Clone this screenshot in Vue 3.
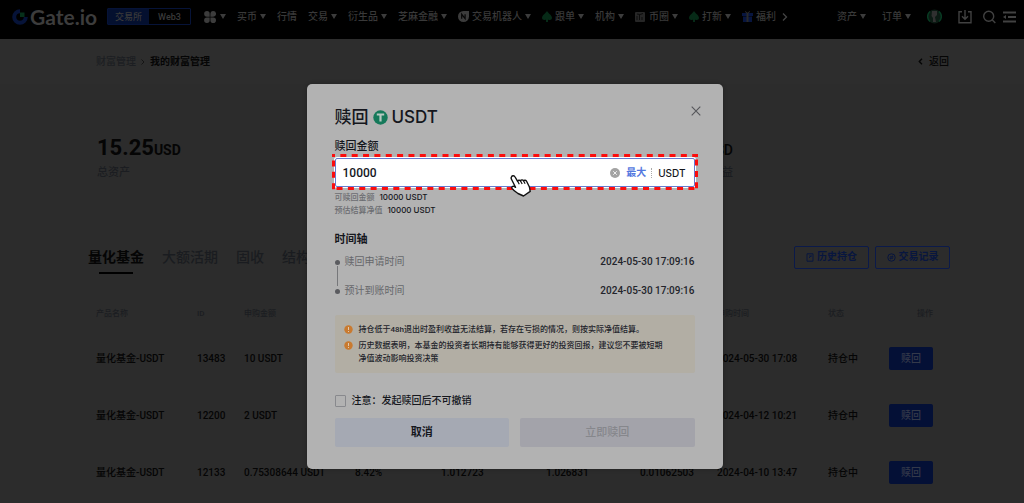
<script setup>
import { ref } from 'vue'

const amount = ref('10000')
const agreed = ref(false)

const navItems = [
  { label: '买币', arrow: true },
  { label: '行情' },
  { label: '交易', arrow: true },
  { label: '衍生品', arrow: true },
  { label: '芝麻金融', arrow: true },
  { label: '交易机器人', arrow: true, icon: 'bot' },
  { label: '跟单', arrow: true, icon: 'leaf' },
  { label: '机构', arrow: true },
  { label: '币圈', arrow: true, icon: 'chart' },
  { label: '打新', arrow: true, icon: 'leaf' },
  { label: '福利', icon: 'gift' }
]

const tabs = ['量化基金', '大额活期', '固收', '结构化']

const columns = ['产品名称', 'ID', '申购金额', '', '', '', '', '申购时间', '状态', '操作']

const rows = [
  ['量化基金-USDT', '13483', '10 USDT', '', '', '', '', '2024-05-30 17:08', '持仓中'],
  ['量化基金-USDT', '12200', '2 USDT', '', '', '', '', '2024-04-12 10:21', '持仓中'],
  ['量化基金-USDT', '12133', '0.75308644 USDT', '8.42%', '1.012723', '1.026831', '0.01062503', '2024-04-10 13:47', '持仓中']
]

const timeline = [
  { label: '赎回申请时间', time: '2024-05-30 17:09:16' },
  { label: '预计到账时间', time: '2024-05-30 17:09:16' }
]
</script>

<template>
  <div class="page">
    <header class="topbar">
      <a class="logo" href="#">
        <svg width="18" height="18" viewBox="0 0 18 18">
          <path d="M9 3.2A5.8 5.8 0 1 0 14.8 9" fill="none" stroke="#061338" stroke-width="4" />
          <rect x="9" y="4.5" width="4.5" height="4.5" fill="#06301a" />
        </svg>
        <span>Gate.io</span>
      </a>
      <div class="switch">
        <button class="on">交易所</button>
        <button>Web3</button>
      </div>
      <button class="apps" aria-label="应用">
        <svg width="12" height="12" viewBox="0 0 12 12" fill="#3c3c3c">
          <path d="M3 0a2.7 2.7 0 0 1 2.7 2.7v3H3A2.8 2.8 0 0 1 3 0zM9.2 0a2.8 2.8 0 0 1 0 5.7H6.4v-3A2.7 2.7 0 0 1 9.2 0zM3 6.4h2.7v2.8A2.8 2.8 0 1 1 3 6.4zM6.4 6.4h2.8a2.8 2.8 0 1 1-2.8 2.8z" />
        </svg>
        <i class="caret"></i>
      </button>
      <nav class="nav">
        <a v-for="(item, i) in navItems" :key="i" href="#">
          <svg v-if="item.icon === 'bot'" width="11" height="11" viewBox="0 0 11 11">
            <path d="M5.5 0H11v5.5A5.5 5.5 0 1 1 5.5 0z" fill="#3c3c3c" />
            <path d="M3.7 7.8V3.3l3.4 4.3V3.2" fill="none" stroke="#050505" stroke-width="1.2" />
          </svg>
          <svg v-else-if="item.icon === 'leaf'" width="10" height="11" viewBox="0 0 10 11">
            <path d="M5 0c1 2 5 4.400 5 6.800C10 9 7.400 9.600 6 8.500V11H4V8.500C2.600 9.600 0 9 0 6.800 0 4.400 4 2 5 0z" fill="#062a17" />
          </svg>
          <svg v-else-if="item.icon === 'chart'" width="11" height="11" viewBox="0 0 11 11">
            <rect y="1" width="10" height="10" rx="1" fill="#262626" />
            <path d="M2 9V5M4.500 9V4M7 9V6M2 3l3 .5L8 2.500" fill="none" stroke="#0c0c0c" />
          </svg>
          <svg v-else-if="item.icon === 'gift'" width="11" height="11" viewBox="0 0 11 11">
            <path d="M0 2h11v3H0zM1 5.500h9V11H1z" fill="#07153f" />
            <path d="M4.500 2h2v9h-2z" fill="#292929" />
            <path d="M5.500 2L3 .5M5.500 2L8 .5" stroke="#292929" />
          </svg>
          <span>{{ item.label }}</span>
          <i v-if="item.arrow" class="caret"></i>
        </a>
        <svg class="more" width="6" height="8" viewBox="0 0 6 8"><path d="M1 .5L4.500 4 1 7.500" fill="none" stroke="#444" stroke-width="1.3" /></svg>
      </nav>
      <div class="account">
        <a href="#"><span>资产</span><i class="caret"></i></a>
        <a href="#"><span>订单</span><i class="caret"></i></a>
        <svg width="15" height="15" viewBox="0 0 15 15">
          <circle cx="7.500" cy="7.500" r="7" fill="#0b1a13" />
          <path d="M3 2.500a6.500 6.500 0 0 0 0 10M12 2.500a6.500 6.500 0 0 1 0 10" fill="none" stroke="#083a22" stroke-width="1.500" />
          <path d="M5 2h5v4l-2 2 1 5H6V9L4.500 7z" fill="#303030" />
        </svg>
        <svg width="14" height="14" viewBox="0 0 14 14" fill="none" stroke="#414141" stroke-width="1.4">
          <path d="M4 1.700H1v11h12v-11h-3M7 0v9M4 6.300l3 3 3-3" />
        </svg>
        <svg class="search" width="13" height="14" viewBox="0 0 13 14" fill="none" stroke="#414141" stroke-width="1.400">
          <circle cx="5.700" cy="6.200" r="5" /><path d="M9.300 10l3 3" />
        </svg>
        <svg class="menu" width="13" height="12" viewBox="0 0 13 12" fill="#414141">
          <path d="M0 .5h13v2H0zM5 5h8v2H5zM0 9.500h13v2H0zM0 6l3-2v4z" />
        </svg>
      </div>
    </header>

    <div class="crumbs">
      <div class="path">
        <a href="#">财富管理</a>
        <svg width="4" height="6" viewBox="0 0 4 6"><path d="M.5.5L3 3 .5 5.500" fill="none" stroke="#151515" /></svg>
        <b>我的财富管理</b>
      </div>
      <a class="back" href="#">
        <svg width="5" height="7" viewBox="0 0 5 7"><path d="M4 .8L1.300 3.500 4 6.200" fill="none" stroke="#050505" stroke-width="1.400" /></svg>
        返回
      </a>
    </div>

    <main class="content">
      <section class="stats">
        <div class="stat">
          <p class="value">15.25<small>USD</small></p>
          <p class="name">总资产</p>
        </div>
        <div class="stat right">
          <p class="value"><small>USD</small></p>
          <p class="name">收益</p>
        </div>
      </section>

      <div class="bar">
        <div class="tabs">
          <button v-for="(t, i) in tabs" :key="t" :class="{ active: i === 0 }">{{ t }}</button>
        </div>
        <div class="tools">
          <button>
            <svg width="8" height="9" viewBox="0 0 8 9" fill="none" stroke="#08163f"><path d="M1 .8h6v7.400H1zM3 3h3M3 5l2-2" /></svg>
            历史持仓
          </button>
          <button>
            <svg width="9" height="9" viewBox="0 0 9 9" fill="none" stroke="#08163f"><circle cx="4.500" cy="4.500" r="3.700" /><path d="M3 3.800h3.200L5 2.700M6 5.200H2.800L4 6.300" /></svg>
            交易记录
          </button>
        </div>
      </div>

      <table class="list">
        <colgroup>
          <col v-for="n in 10" :key="n" :class="'c' + n" />
        </colgroup>
        <thead>
          <tr><th v-for="(c, i) in columns" :key="i">{{ c }}</th></tr>
        </thead>
        <tbody>
          <tr v-for="r in rows" :key="r[1]">
            <td v-for="(v, i) in r" :key="i">{{ v }}</td>
            <td><button>赎回</button></td>
          </tr>
        </tbody>
      </table>
    </main>

    <div class="overlay">
      <form class="modal" role="dialog" aria-labelledby="dlg-title" @submit.prevent>
        <div class="head">
          <h2 id="dlg-title">
            赎回
            <svg width="15" height="15" viewBox="0 0 15 15">
              <circle cx="7.500" cy="7.500" r="7.200" fill="#15795a" />
              <path d="M3.800 3.600h7.400v2H8.600v6H6.400v-6H3.800z" fill="#b7c9c2" />
            </svg>
            <span>USDT</span>
          </h2>
          <button class="close" type="button" aria-label="关闭">
            <svg width="10" height="10" viewBox="0 0 10 10"><path d="M.7.7l8.600 8.600M9.300.7L.7 9.300" stroke="#55565a" stroke-width="1.100" /></svg>
          </button>
        </div>

        <label class="label" for="amount">赎回金额</label>
        <div class="field">
          <input id="amount" v-model="amount" type="text" />
          <button class="clear" type="button" aria-label="清除">
            <svg width="10" height="10" viewBox="0 0 10 10"><circle cx="5" cy="5" r="5" fill="#a3a3a3" /><path d="M3.200 3.200l3.600 3.600M6.800 3.200L3.200 6.800" stroke="#eee" /></svg>
          </button>
          <button class="max" type="button">最大</button>
          <i class="sep"></i>
          <span class="unit">USDT</span>
          <svg class="marker" aria-hidden="true"><rect x="0" y="0" width="100%" height="100%" fill="none" stroke="#fb0d0d" stroke-width="6" stroke-dasharray="6 5.350" stroke-dashoffset="3" /></svg>
          <svg class="hand" width="23" height="24" viewBox="0 0 23 24">
            <path d="M1.500 2.800C2.300 1.200 4.300 1.500 5.100 3l2.500 4.300c.3-1.300 2-1.500 2.900-.4.600-1.300 2.300-1.300 3.100-.1.900-1 2.400-.7 3.100.7l2.600 5.200c.6 1.400.5 3.200.9 4.700L13.500 22 8 19.500c-2-1.300-4.500-3-6-5.200-.7-1.500.9-2.600 2.200-1.800l1.300.8L1.600 5.500c-.5-.9-.6-1.900-.1-2.700z" fill="#fff" stroke="#111" stroke-width="1.400" stroke-linejoin="round" />
            <path d="M7.600 7.300l1.700 3M10.500 7l1.700 3M13.600 7l1.500 2.700" stroke="#111" stroke-width="1.200" fill="none" />
          </svg>
        </div>
        <p class="hint">可赎回金额<b>10000 USDT</b></p>
        <p class="hint">预估结算净值<b>10000 USDT</b></p>

        <h3>时间轴</h3>
        <ol class="timeline">
          <li v-for="t in timeline" :key="t.label">
            <span>{{ t.label }}</span><time>{{ t.time }}</time>
          </li>
        </ol>

        <ul class="notice">
          <li>
            <svg width="9" height="9" viewBox="0 0 9 9"><circle cx="4.500" cy="4.500" r="4.200" fill="#c97a2f" /><path d="M4.500 2v3M4.500 6v1" stroke="#e0c9ae" /></svg>
            <span>持仓低于48h退出时盈利收益无法结算，若存在亏损的情况，则按实际净值结算。</span>
          </li>
          <li>
            <svg width="9" height="9" viewBox="0 0 9 9"><circle cx="4.500" cy="4.500" r="4.200" fill="#c97a2f" /><path d="M4.500 2v3M4.500 6v1" stroke="#e0c9ae" /></svg>
            <span>历史数据表明，本基金的投资者长期持有能够获得更好的投资回报，建议您不要被短期<br />净值波动影响投资决策</span>
          </li>
        </ul>

        <label class="agree"><input v-model="agreed" type="checkbox" />注意：发起赎回后不可撤销</label>
        <div class="actions">
          <button class="cancel" type="button">取消</button>
          <button class="submit" type="submit" disabled>立即赎回</button>
        </div>
      </form>
    </div>
  </div>
</template>

<style>
body {
  margin: 0;
  background: #2c2c2c;
  overflow: hidden;
}
</style>

<style scoped>
.page {
  position: relative;
  min-height: 100vh;
  font: 500 10px/14px Roboto, "Noto Sans CJK SC", sans-serif;
  color: #050505;
}
.page * { box-sizing: border-box; }
a { color: inherit; text-decoration: none; }
button {
  font: inherit;
  color: inherit;
  padding: 0;
  border: 0;
  background: none;
  white-space: nowrap;
}
p, h2, h3, ol, ul { margin: 0; padding: 0; list-style: none; }
svg { display: block; flex: none; }

.topbar {
  display: flex;
  align-items: center;
  height: 39px;
  padding: 0 8px 6px 11px;
  background: #000;
  color: #393939;
  white-space: nowrap;
}
.logo {
  display: flex;
  align-items: center;
  gap: 1px;
  width: 96px;
  font: 700 21px/24px Lato, sans-serif;
  color: #3c3c3c;
}
.switch {
  display: flex;
  width: 84px;
  height: 17px;
  border: 1px solid #061338;
  border-radius: 1px;
}
.switch button { flex: 1; font-size: 9px; line-height: 14px; }
.switch .on { background: #04102f; }
.apps { display: flex; align-items: center; gap: 4px; margin: 0 11px 0 13px; }
.caret {
  border: 3px solid transparent;
  border-top: 5px solid #3c3c3c;
  border-bottom: 0;
}
.nav { display: flex; align-items: center; gap: 11px; }
.nav a, .account a { display: flex; align-items: center; gap: 3px; }
.more { margin-left: -5px; }
.account { display: flex; align-items: center; gap: 16px; margin-left: auto; }
.search { margin-left: -5px; }
.menu { margin-left: -9px; }

.crumbs {
  display: flex;
  justify-content: space-between;
  align-items: center;
  height: 45px;
  padding: 0 75px 0 96px;
  background: #2d2d2d;
}
.path { display: flex; align-items: center; gap: 5px; }
.back { display: flex; align-items: center; gap: 6px; }
.path a { color: #1c1e22; }
.path b { font-weight: 700; }

.content { padding: 0 74px 0 96px; }
.stats { display: flex; justify-content: space-between; padding: 50px 219px 0 1px; }
.value { font-weight: 700; font-size: 22px; line-height: 28px; }
.value small { font-size: 14px; font-weight: 700; }
.name { margin-top: 2px; font-size: 11px; line-height: 14px; color: #1b1d21; }
.stat.right { text-align: right; padding-right: 0; margin-right: -2px; }
.stat.right small { font-weight: 500; }

.bar { display: flex; justify-content: space-between; align-items: center; margin: 65px 0 0 -8px; }
.tabs { display: flex; gap: 18px; }
.tabs button { position: relative; font-size: 14px; line-height: 24px; color: #1a1c20; }
.tabs .active { font-weight: 700; color: #050505; }
.tabs .active::after {
  content: "";
  position: absolute;
  left: 11px;
  right: 11px;
  bottom: -5px;
  height: 2px;
  background: #000;
}
.tools { display: flex; gap: 6px; }
.tools button {
  display: flex;
  align-items: center;
  justify-content: center;
  gap: 3px;
  width: 75px;
  height: 23px;
  border: 1px solid #0b1a4a;
  border-radius: 2px;
  color: #08163f;
  font-weight: 700;
}

.list { width: 100%; table-layout: fixed; border-collapse: collapse; margin-top: 29px; }
.c1 { width: 101px; }
.c2 { width: 47px; }
.c3 { width: 111px; }
.c4 { width: 86px; }
.c5 { width: 105px; }
.c6 { width: 94px; }
.c7 { width: 77px; }
.c8 { width: 111px; }
.c9 { width: 50px; }
.list th {
  padding: 0;
  height: 32px;
  font-size: 8px;
  font-weight: 500;
  line-height: 12px;
  text-align: left;
  color: #1b1d21;
}
.list td { padding: 0; height: 57px; white-space: nowrap; }
.list th:last-child, .list td:last-child { text-align: right; padding-right: 17px; }
.list button {
  width: 44px;
  height: 23px;
  border-radius: 2px;
  background: #041036;
  color: #34394a;
}

.overlay {
  position: absolute;
  inset: 0;
  display: flex;
  justify-content: center;
  align-items: flex-start;
  padding: 84px 0 0 5px;
}
.modal {
  width: 416px;
  padding: 22px 28px;
  border-radius: 5px;
  background: #b2b2b2;
  color: #15171d;
  box-shadow: 0 0 4px rgba(0, 0, 0, .25);
}
.head { display: flex; justify-content: space-between; align-items: flex-start; }
.head h2 {
  display: flex;
  align-items: center;
  gap: 4px;
  font-size: 17px;
  font-weight: 500;
  line-height: 22px;
}
.head h2 span { font-family: Inter, sans-serif; }
.close { padding: 0; margin-right: -6px; }
.label { display: block; margin-top: 12px; font-size: 11px; line-height: 14px; }
.field {
  position: relative;
  display: flex;
  align-items: center;
  height: 29px;
  margin-top: 4px;
  padding: 0 8px 0 7px;
  background: #fff;
  border: 1px solid #667bd0;
  border-radius: 2px;
  box-shadow: 0 0 0 1px #fff;
}
.field input {
  flex: 1;
  min-width: 0;
  padding: 0;
  border: 0;
  outline: 0;
  background: none;
  color: #15171d;
  font: 500 12px/18px Roboto, sans-serif;
}
.max { margin-left: 6px; color: #5478e0; font-weight: 700; }
.sep { height: 10px; margin: 0 6px 0 5px; border-left: 1px dotted #aaa; }
.unit { font: 500 10px/14px Inter, sans-serif; }
.marker { position: absolute; left: -4px; top: -5px; width: calc(100% + 8px); height: calc(100% + 9px); }
.hand { position: absolute; left: 174px; top: 15px; }
.hint { font-size: 8px; line-height: 13px; color: #6c6d71; }
.hint b { margin-left: 5px; font: 500 8px/13px Inter, sans-serif; color: #15171d; }
.field + .hint { margin-top: 4px; }
h3 { margin-top: 16px; font-size: 11px; line-height: 14px; font-weight: 700; }
.timeline { margin-top: 8px; color: #66676b; }
.timeline li {
  position: relative;
  display: flex;
  justify-content: space-between;
  align-items: center;
  padding-left: 10px;
}
.timeline li + li { margin-top: 15px; }
.timeline span { font-weight: 400; }
.timeline time { color: #22242b; }
.timeline li::before {
  content: "";
  position: absolute;
  left: 0;
  top: 5px;
  width: 5px;
  height: 5px;
  border-radius: 50%;
  background: #5a5b5f;
}
.timeline li:first-child::after {
  content: "";
  position: absolute;
  left: 2px;
  top: 11px;
  height: 20px;
  border-left: 1px solid #76777a;
}
.notice {
  margin-top: 17px;
  padding: 8px 9px;
  border-radius: 2px;
  background: #b2aea4;
  font-size: 8px;
  line-height: 13px;
  color: #22242b;
}
.notice li { display: flex; gap: 6px; white-space: nowrap; }
.notice li + li { margin-top: 3px; }
.notice svg { margin-top: 2px; }
.agree { display: flex; align-items: center; gap: 6px; margin-top: 21px; }
.agree input {
  appearance: none;
  width: 11px;
  height: 12px;
  margin: 0;
  border: 1px solid #88898d;
  border-radius: 1px;
}
.actions { display: flex; gap: 11px; margin-top: 10px; }
.actions button { flex: 1; height: 29px; border-radius: 2px; font-size: 11px; }
.cancel { background: #a5a9b3; font-weight: 700; }
.submit { background: #a3a3aa; color: #86878c; }
</style>
